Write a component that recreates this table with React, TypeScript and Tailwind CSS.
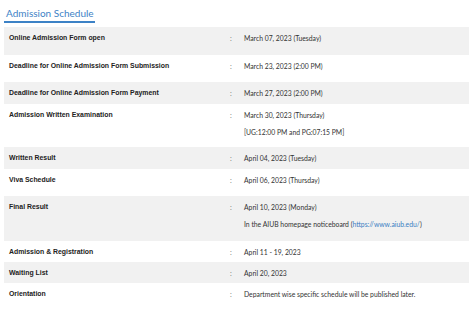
import React from "react";

type Row = { label: string; lines: React.ReactNode[]; h: string; grey: boolean };

const rows: Row[] = [
  { label: "Online Admission Form open", lines: ["March 07, 2023 (Tuesday)"], h: "h-[28px]", grey: true },
  { label: "Deadline for Online Admission Form Submission", lines: ["March 23, 2023 (2:00 PM)"], h: "h-[27px]", grey: false },
  { label: "Deadline for Online Admission Form Payment", lines: ["March 27, 2023 (2:00 PM)"], h: "h-[22px]", grey: true },
  { label: "Admission Written Examination", lines: ["March 30, 2023 (Thursday)", "[UG:12:00 PM and PG:07:15 PM]"], h: "h-[43px]", grey: false },
  { label: "Written Result", lines: ["April 04, 2023 (Tuesday)"], h: "h-[22px]", grey: true },
  { label: "Viva Schedule", lines: ["April 06, 2023 (Thursday)"], h: "h-[27px]", grey: false },
  {
    label: "Final Result",
    lines: [
      "April 10, 2023 (Monday)",
      <span key="l">
        In the AIUB homepage noticeboard (<span className="text-[#3a7ec2]">https://www.aiub.edu/</span>)
      </span>,
    ],
    h: "h-[45px]",
    grey: true,
  },
  { label: "Admission & Registration", lines: ["April 11 - 19, 2023"], h: "h-[21px]", grey: false },
  { label: "Waiting List", lines: ["April 20, 2023"], h: "h-[21px]", grey: true },
  { label: "Orientation", lines: ["Department wise specific schedule will be published later."], h: "h-[30px]", grey: false },
];

export default function App() {
  return (
    <div className="w-[474px] h-[319px] bg-white overflow-hidden">
      <div className="pl-[4px] pr-[5px]">
        <div className="pt-[7px] h-[27px]">
          <div
            className="w-fit text-[10px] leading-[12px] text-[#3d82c6] pl-[2px] pr-[1px] pb-[2px] border-b-2 border-[#3d82c6]"
            style={{ fontFamily: "Lato, 'Open Sans', sans-serif" }}
          >
            Admission Schedule
          </div>
        </div>
        {rows.map((r, i) => (
          <div key={i} className={`flex ${r.h} pt-[5px] ${r.grey ? "bg-[#f1f1f1]" : "bg-white"}`}>
            <div
              className="w-[224px] pl-[5px] text-[6.9px] leading-[12px] font-bold text-[#222]"
              style={{ fontFamily: "'Liberation Sans', Arial, sans-serif" }}
            >
              {r.label}
            </div>
            <div
              className="w-[16px] pl-[2px] text-[7px] leading-[12px] text-[#777]"
              style={{ fontFamily: "Lato, sans-serif" }}
            >
              :
            </div>
            <div
              className="flex flex-col gap-[5px] text-[6.8px] leading-[12px] text-[#333]"
              style={{ fontFamily: "Lato, sans-serif" }}
            >
              {r.lines.map((l, j) => (
                <div key={j}>{l}</div>
              ))}
            </div>
          </div>
        ))}
      </div>
    </div>
  );
}
